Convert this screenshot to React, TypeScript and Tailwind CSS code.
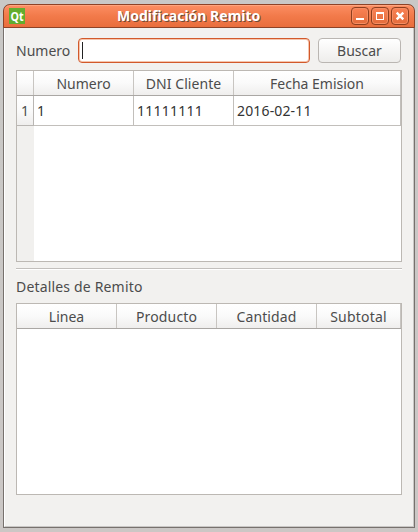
import React from "react";

const headerFill = "bg-linear-to-b from-white via-[#fafafa] to-[#efeeed]";

function TitleButton({ children }: { children: React.ReactNode }) {
  return (
    <div className="h-[18px] w-[18px] rounded-[4px] border border-[#8f3f1f] bg-linear-to-b from-[#fa8255] to-[#e46c3b] shadow-[inset_0_0_0_1px_#f68d62]">
      <svg width="16" height="16" viewBox="0 0 16 16" fill="none" stroke="#fff" shapeRendering="crispEdges">
        {children}
      </svg>
    </div>
  );
}

function HeaderCell({ label, width, spacing }: { label: string; width: string; spacing: string }) {
  return (
    <div className={`${headerFill} ${width} flex h-6 shrink-0 items-center justify-center border-r border-[#c8c5c1] pt-px`}>
      <span className={spacing}>{label}</span>
    </div>
  );
}

function Cell({ text, width, spacing }: { text: string; width: string; spacing: string }) {
  return (
    <div className={`${width} flex h-[30px] shrink-0 items-center border-r border-b border-[#c2bfbb] pl-[3px] text-[#333]`}>
      <span className={spacing}>{text}</span>
    </div>
  );
}

export default function App() {
  return (
    <div className="h-[532px] w-[418px] overflow-hidden bg-linear-to-b from-[#c9c8c6] to-[#cbc7c5] pt-1 pl-[3px] font-['Noto_Sans',sans-serif] text-[14px] leading-[20px] text-[#4c4c4c]">
      <div className="flex h-[524px] w-[412px] flex-col overflow-hidden rounded-t-[7px] bg-[#77716d]">
        <header className="flex h-6 shrink-0 items-start rounded-t-[7px] border border-[#8e4327] bg-linear-to-b from-[#fc8e62] via-[#f27a4a] to-[#e96e3c] pl-[5px] shadow-[inset_0_1px_0_#ffa47d]">
          <div className="mt-[3px] flex h-4 w-4 items-center justify-center bg-[#62ad2e] font-['Open_Sans',sans-serif] text-[13px] leading-none font-bold text-white">
            <span className="inline-block scale-x-[0.82]">Qt</span>
          </div>
          <h1 className="mt-[1px] ml-[92px] w-[234px] text-[14px] leading-[20px] font-bold whitespace-nowrap text-white [text-shadow:1px_1px_0_#6f4a36]">
            Modificación Remito
          </h1>
          <div className="mt-[2px] flex gap-[2px]">
            <TitleButton><path d="M4 11h8" strokeWidth="2" /></TitleButton>
            <TitleButton><path d="M4.5 5v7M11.5 5v7M4 11.5h8" strokeWidth="1" /><path d="M4 5h8" strokeWidth="2" /></TitleButton>
            <TitleButton><path d="m4.7 4.7 6.6 6.6m0-6.6-6.6 6.6" strokeWidth="2.4" shapeRendering="auto" /></TitleButton>
          </div>
        </header>

        <main className="mx-px mb-px flex min-h-0 flex-1 flex-col border-r border-b border-l border-r-[#c9c7c5] border-b-[#c9c7c5] border-l-white bg-[#f2f1ef] pt-[10px] pr-[11px] pl-[11px]">
          <div className="flex h-[25px] shrink-0">
            <label className="w-[62px] pt-[3px]"><span>Numero</span></label>
            <div className="h-[25px] w-[232px] rounded-[4px] border border-[#d2592b] bg-white p-[3px] shadow-[inset_0_0_0_1px_#f5c5ad]">
              <div className="h-[17px] w-px bg-[#222]" />
            </div>
            <button className="ml-2 flex h-[25px] w-[83px] items-start justify-center rounded-[4px] border border-[#bab6b2] bg-linear-to-b from-white to-[#eeedeb] pt-[2px] leading-[20px]">
              <span>Buscar</span>
            </button>
          </div>

          <section className="mt-[7px] h-[192px] w-[386px] shrink-0 border border-[#bcb8b3] bg-white">
            <div className="flex h-[25px] border-b border-[#aaa7a4]">
              <div className={`${headerFill} w-[17px] shrink-0 border-r border-[#c8c5c1]`} />
              <HeaderCell label="Numero" width="w-[100px]" spacing="" />
              <HeaderCell label="DNI Cliente" width="w-[100px]" spacing="tracking-[0.05px]" />
              <HeaderCell label="Fecha Emision" width="w-[167px]" spacing="" />
            </div>
            <div className="flex h-[30px]">
              <div className={`${headerFill} flex w-[17px] shrink-0 items-center justify-center border-r border-b border-[#b9b6b3]`}>1</div>
              <Cell text="1" width="w-[100px]" spacing="" />
              <Cell text="11111111" width="w-[100px]" spacing="tracking-[0.25px]" />
              <Cell text="2016-02-11" width="w-[167px]" spacing="tracking-[0.15px]" />
            </div>
            <div className="h-[135px] w-[17px] bg-[#f1f0ee]" />
          </section>

          <div className="mt-[6px] h-[2px] w-[386px] shrink-0 border-t border-[#c2bfbc] bg-white" />
          <div className="h-[33px] shrink-0 pt-[7px]"><span className="tracking-[0.17px]">Detalles de Remito</span></div>

          <section className="h-[192px] w-[386px] shrink-0 border border-[#bcb8b3] bg-white">
            <div className="flex h-[25px] border-b border-[#aaa7a4]">
              <HeaderCell label="Linea" width="w-[100px]" spacing="" />
              <HeaderCell label="Producto" width="w-[100px]" spacing="tracking-[0.15px]" />
              <HeaderCell label="Cantidad" width="w-[100px]" spacing="tracking-[0.12px]" />
              <HeaderCell label="Subtotal" width="w-[84px]" spacing="tracking-[0.2px]" />
            </div>
          </section>
        </main>
      </div>
    </div>
  );
}
